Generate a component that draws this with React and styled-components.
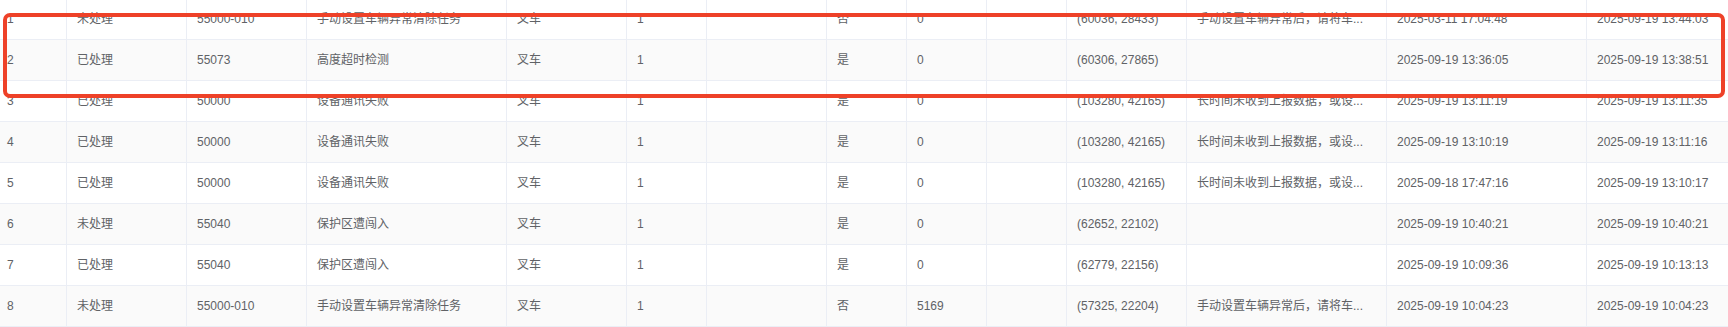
import React from "react";
import styled, { createGlobalStyle } from "styled-components";

const GlobalStyle = createGlobalStyle`
  html, body {
    margin: 0;
    padding: 0;
    background: #ffffff;
    overflow: hidden;
  }
`;

const Viewport = styled.div`
  position: relative;
  width: 1728px;
  height: 327px;
  overflow: hidden;
  background: #ffffff;
`;

const Table = styled.table`
  margin-top: -1px;
  width: 1787px;
  table-layout: fixed;
  border-collapse: separate;
  border-spacing: 0;
  font-family: "Liberation Sans", "Noto Sans CJK SC", sans-serif;
  font-size: 12px;
  color: #606266;
`;

const Row = styled.tr`
  background: ${(p) => (p.$striped ? "#fafafa" : "#ffffff")};
`;

const Td = styled.td`
  padding: 0;
  border-right: 1px solid #ebeef5;
  border-bottom: 1px solid #ebeef5;
`;

const Cell = styled.div`
  height: 40px;
  line-height: 40px;
  padding: 0 10px 0 ${(p) => (p.$first ? "7px" : "10px")};
  white-space: nowrap;
  overflow: hidden;
  text-overflow: ellipsis;
`;

const Highlight = styled.div`
  position: absolute;
  left: 3px;
  top: 13px;
  width: 1722px;
  height: 85px;
  box-sizing: border-box;
  border: 4px solid #ee4128;
  border-radius: 7px;
  pointer-events: none;
`;

const widths = [67, 120, 120, 200, 120, 80, 120, 80, 80, 80, 120, 200, 200, 200];

const MANUAL = "手动设置车辆异常后，请将车...";
const COMM = "长时间未收到上报数据，或设...";

const rows = [
  ["1", "未处理", "55000-010", "手动设置车辆异常清除任务", "叉车", "1", "", "否", "0", "", "(60036, 28433)", MANUAL, "2025-03-11 17:04:48", "2025-09-19 13:44:03"],
  ["2", "已处理", "55073", "高度超时检测", "叉车", "1", "", "是", "0", "", "(60306, 27865)", "", "2025-09-19 13:36:05", "2025-09-19 13:38:51"],
  ["3", "已处理", "50000", "设备通讯失败", "叉车", "1", "", "是", "0", "", "(103280, 42165)", COMM, "2025-09-19 13:11:19", "2025-09-19 13:11:35"],
  ["4", "已处理", "50000", "设备通讯失败", "叉车", "1", "", "是", "0", "", "(103280, 42165)", COMM, "2025-09-19 13:10:19", "2025-09-19 13:11:16"],
  ["5", "已处理", "50000", "设备通讯失败", "叉车", "1", "", "是", "0", "", "(103280, 42165)", COMM, "2025-09-18 17:47:16", "2025-09-19 13:10:17"],
  ["6", "未处理", "55040", "保护区遭闯入", "叉车", "1", "", "是", "0", "", "(62652, 22102)", "", "2025-09-19 10:40:21", "2025-09-19 10:40:21"],
  ["7", "已处理", "55040", "保护区遭闯入", "叉车", "1", "", "是", "0", "", "(62779, 22156)", "", "2025-09-19 10:09:36", "2025-09-19 10:13:13"],
  ["8", "未处理", "55000-010", "手动设置车辆异常清除任务", "叉车", "1", "", "否", "5169", "", "(57325, 22204)", MANUAL, "2025-09-19 10:04:23", "2025-09-19 10:04:23"],
];

export default function App() {
  return (
    <Viewport>
      <GlobalStyle />
      <Table>
        <colgroup>
          {widths.map((w, i) => (
            <col key={i} style={{ width: w }} />
          ))}
        </colgroup>
        <tbody>
          {rows.map((row, rowIdx) => (
            <Row key={rowIdx} $striped={rowIdx % 2 === 1}>
              {row.map((val, colIdx) => (
                <Td key={colIdx}>
                  <Cell $first={colIdx === 0}>{val}</Cell>
                </Td>
              ))}
            </Row>
          ))}
        </tbody>
      </Table>
      <Highlight />
    </Viewport>
  );
}
